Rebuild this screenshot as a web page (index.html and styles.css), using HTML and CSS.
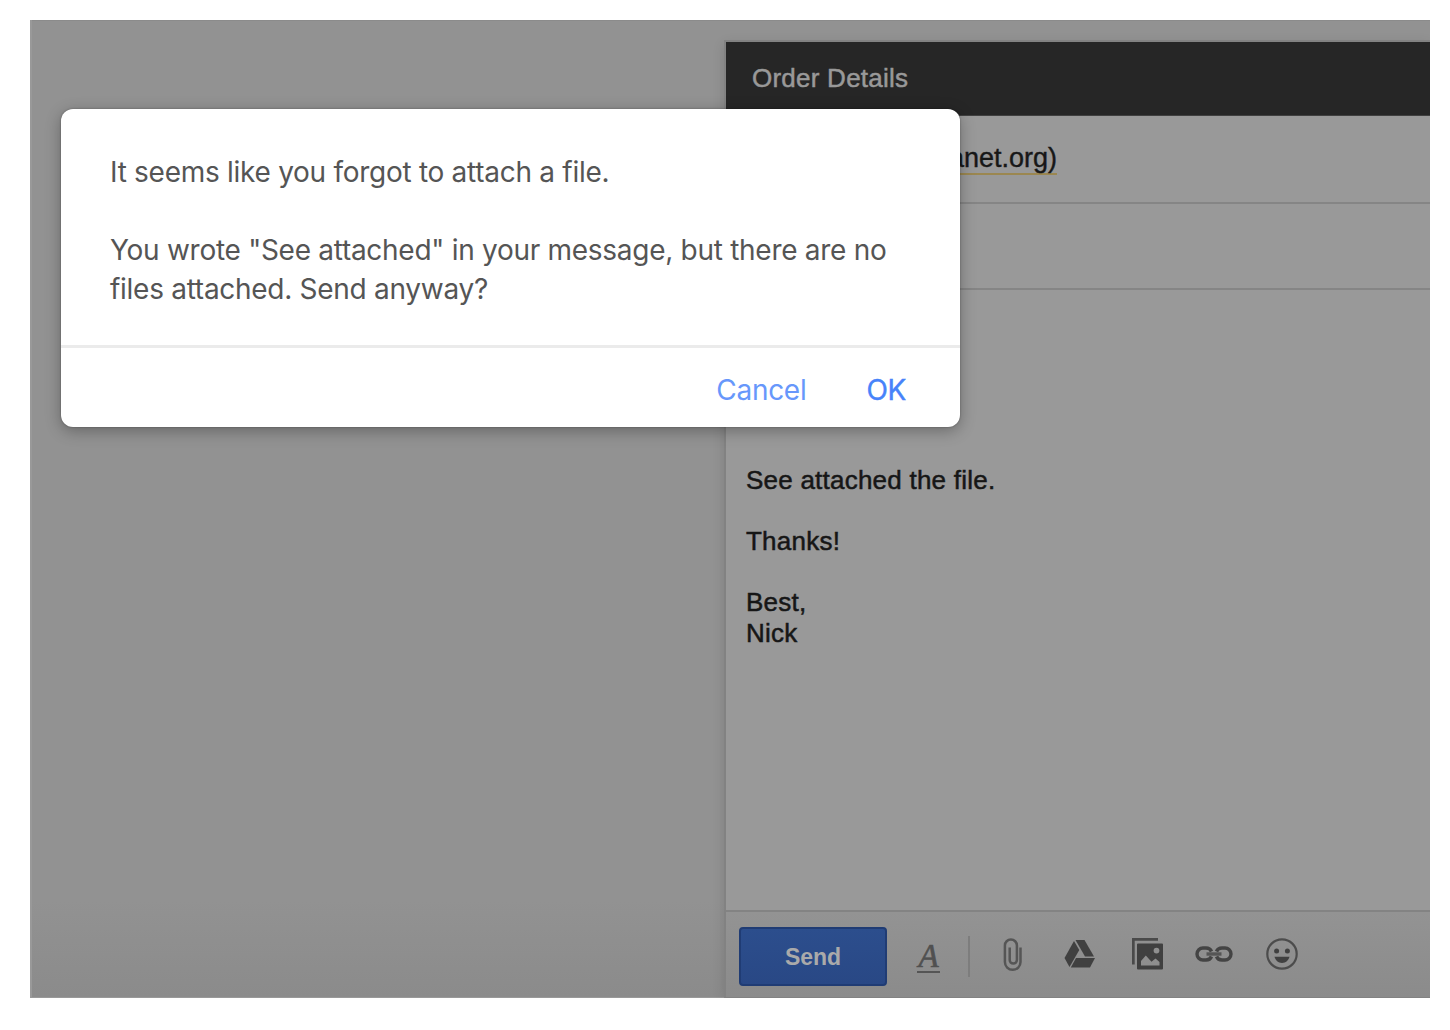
FILE: index.html
```html
<!DOCTYPE html>
<html lang="en">
<head>
<meta charset="utf-8">
<title>Order Details</title>
<link rel="stylesheet" href="styles.css">
</head>
<body>
<main class="screen">
  <section class="compose">
    <header class="compose-header"><span class="title">Order Details</span></header>
    <div class="field recipient"><span class="address">anet.org)</span></div>
    <div class="field"></div>
    <div class="message">
      <p>See attached the file.</p>
      <p class="line-thanks">Thanks!</p>
      <p>Best,<br>Nick</p>
    </div>
    <footer class="toolbar">
      <button class="send" type="button">Send</button>
      <span class="format">A</span>
      <span class="divider"></span>
      <svg class="icon clip" width="20" height="36" viewBox="0 0 20 36" fill="none" stroke="#555" stroke-width="2.500"><path d="M17.500 10.500V25a7.800 7.800 0 0 1-15.600 0V8.500a6 6 0 0 1 12 0V23a3.600 3.600 0 0 1-7.200 0V10.500"/></svg>
      <svg class="icon drive" width="32" height="28" viewBox="0 0 32 28" fill="#404040"><path d="M10 1 0.500 18 5.500 27 15.300 10z"/><path d="M11.500 0H20.500L30 16.500H21z"/><path d="M12 18H31L26 27.500H6.800z"/></svg>
      <svg class="icon photos" width="32" height="32" viewBox="0 0 32 32"><path fill="#4a4a4a" d="M0 0h26v2.700H2.700V26.500H0z"/><path fill="#404040" fill-rule="evenodd" d="M6 5.500h24q1 0 1 1V30.500q0 1-1 1H6q-1 0-1-1V6.500q0-1 1-1zM24.500 9.700a2.900 2.900 0 1 0 0 5.800 2.900 2.900 0 0 0 0-5.800zM9 27.500H27.500V24L23.500 20.500 19.500 23.800 13.800 17.500 9 23z"/></svg>
      <svg class="icon link" width="38" height="16" viewBox="0 0 38 16" fill="none" stroke="#444" stroke-width="3.400"><path d="M16.500 5.500C15.500 3 13.500 2 11 2H8A6 6 0 0 0 8 14H11C13.500 14 15.500 13 16.500 10.500M21.500 5.500C22.500 3 24.500 2 27 2H30A6 6 0 0 1 30 14H27C24.500 14 22.500 13 21.500 10.500"/><path stroke="#555" d="M11.500 8H26.500"/></svg>
      <svg class="icon smile" width="32" height="32" viewBox="0 0 32 32"><circle cx="16" cy="16" r="14.700" fill="none" stroke="#4c4c4c" stroke-width="2.200"/><g fill="#404040"><circle cx="10.600" cy="13" r="2.500"/><circle cx="21.400" cy="13" r="2.500"/><path d="M8.500 18.800H23.500C22.500 22.500 19.800 25 16 25S9.500 22.500 8.500 18.800z"/></g></svg>
    </footer>
  </section>
  <div class="dialog" role="alertdialog">
    <div class="dialog-body">
      <p>It seems like you forgot to attach a file.</p>
      <p class="warning">You wrote "See attached" in your message, but there are no<br>files attached. Send anyway?</p>
    </div>
    <div class="actions"><span class="cancel">Cancel</span><span class="ok">OK</span></div>
  </div>
</main>
</body>
</html>
```
FILE: styles.css
```css
* { box-sizing: border-box; }
body { margin: 0; background: #fff; }
p { margin: 0; }
.screen {
  position: relative;
  width: 1400px;
  height: 978px;
  margin: 20px 0 0 30px;
  padding: 22px 0 1px 696px;
  overflow: hidden;
  background: linear-gradient(#929292 0, #929292 880px, #8b8b8b 976px);
  box-shadow: inset 2px -1px 0 #999, inset 0 1px 0 #8b8b8b;
  font-family: "Liberation Sans", Arial, sans-serif;
}
.compose {
  display: flex;
  flex-direction: column;
  height: 955px;
  background: #999;
  box-shadow: 0 0 0 2px #828282, -1px 3px 12px rgba(0, 0, 0, .15);
}
.compose-header {
  height: 74px;
  padding: 20px 0 0 26px;
  background: #262626;
  border-bottom: 1px solid #404040;
  color: #999;
  font-size: 26px;
  line-height: 32px;
  letter-spacing: .24px;
  -webkit-text-stroke: .5px;
}
.field { height: 86px; border-bottom: 2px solid #858585; }
.field.recipient { height: 88px; padding: 27px 0 0 223px; }
.address {
  display: inline-block;
  height: 32px;
  border-bottom: 2px solid #9b8750;
  color: #171717;
  font-size: 27px;
  line-height: 30px;
  -webkit-text-stroke: .4px;
}
.message {
  flex: 1;
  padding: 175px 0 0 20px;
  color: #161616;
  font-size: 26px;
  line-height: 31px;
  letter-spacing: .23px;
  -webkit-text-stroke: .5px;
}
.line-thanks { margin: 30px 0; }
.toolbar {
  display: flex;
  align-items: flex-start;
  height: 87px;
  padding: 15px 0 0 13px;
  border-top: 2px solid #838383;
  background: linear-gradient(#939393, #8b8b8b);
}
.send {
  width: 148px;
  height: 59px;
  padding: 0;
  border: 2px solid #203c74;
  border-radius: 4px;
  background: linear-gradient(#2c4e8d, #294885);
  color: #aaa;
  font: bold 23px/52px "Liberation Sans", Arial, sans-serif;
}
.format {
  width: 23px;
  height: 31px;
  margin: 15px 0 0 30px;
  border-bottom: 2px solid #555;
  color: #505050;
  font: italic 33px/28px "Liberation Serif", serif;
  text-align: center;
  -webkit-text-stroke: .6px;
}
.divider { width: 2px; height: 41px; margin: 9px 0 0 28px; background: #7d7d7d; }
.icon { flex: none; }
.clip { margin: 10px 0 0 33px; }
.drive { margin: 13px 0 0 41px; }
.photos { margin: 11px 0 0 36px; }
.link { margin: 19px 0 0 31px; }
.smile { margin: 11px 0 0 33px; }
.dialog {
  position: absolute;
  left: 31px;
  top: 89px;
  width: 899px;
  height: 318px;
  border-radius: 12px;
  background: #fff;
  box-shadow: 0 0 2px rgba(0, 0, 0, .35), 0 4px 16px rgba(0, 0, 0, .3);
  font-family: Inter, sans-serif;
}
.dialog-body {
  height: 239px;
  padding: 44px 0 0 49px;
  border-bottom: 3px solid #ebebeb;
  color: #555;
  font-size: 28px;
  line-height: 39px;
  letter-spacing: -.28px;
  white-space: nowrap;
}
.warning { margin-top: 39px; }
.actions {
  display: flex;
  justify-content: flex-end;
  gap: 60px;
  padding: 22px 54px 0 0;
  color: #6797fb;
  font-size: 28px;
  line-height: 40px;
  letter-spacing: -.3px;
}
.ok { color: #4783fa; -webkit-text-stroke: .4px; }
```
